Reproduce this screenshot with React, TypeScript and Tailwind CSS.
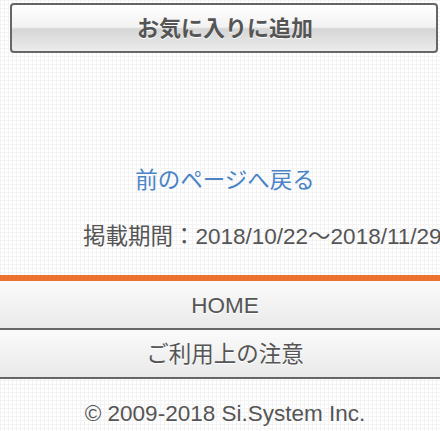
const font = { fontFamily: '"Liberation Sans", "Noto Sans CJK JP", sans-serif' };

function NavRow({ label }: { label: string }) {
  return (
    <a className="flex h-[49px] items-center justify-center border-b-2 border-[#666] bg-[linear-gradient(#fbfbfb,#e9e9e9)] pt-[3px] text-[22.5px] text-[#555] [text-shadow:0_1px_0_#fff]">
      {label}
    </a>
  );
}

export default function App() {
  return (
    <div
      className="h-[431px] w-[440px] overflow-hidden bg-white bg-[linear-gradient(90deg,#f3f3f3_1px,transparent_1px),linear-gradient(#f3f3f3_1px,transparent_1px)] bg-[length:4px_4px]"
      style={font}
    >
      <div className="pl-[10px] pr-[2px] pt-[3px]">
        <button className="flex h-[50px] w-full items-center justify-center rounded-[4px] border-2 border-[#666] bg-[linear-gradient(#ffffff_0%,#f2f2f2_48%,#d6d6d6_52%,#ebebeb_100%)] pl-[2px] text-[22px] font-bold text-[#555] [text-shadow:0_1px_0_#fff]">
          お気に入りに追加
        </button>
      </div>

      <div className="w-[450px]">
        <div className="pt-[111px] text-center">
          <a className="text-[22.5px] text-[#4a84c6]">前のページへ戻る</a>
        </div>

        <p className="mt-[22px] whitespace-nowrap pl-[83px] text-[22.5px] text-[#555]">
          掲載期間：2018/10/22～2018/11/29
        </p>

        <div className="mt-[21px] h-[6px] bg-[#ec722e]" />
        <NavRow label="HOME" />
        <NavRow label="ご利用上の注意" />

        <p className="mt-[18px] text-center text-[22.5px] text-[#555]">© 2009-2018 Si.System Inc.</p>
      </div>
    </div>
  );
}
